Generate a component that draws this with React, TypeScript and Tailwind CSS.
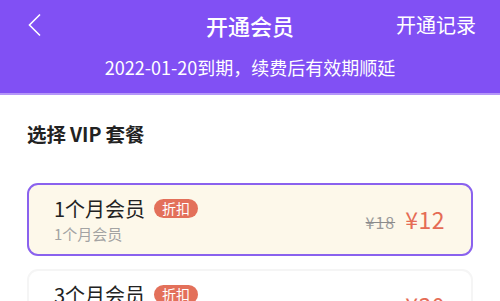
import React from "react";

type Plan = {
  name: string;
  desc: string;
  origin: string;
  price: string;
  active?: boolean;
};

const plans: Plan[] = [
  { name: "1个月会员", desc: "1个月会员", origin: "¥18", price: "¥12", active: true },
  { name: "3个月会员", desc: "3个月会员", origin: "¥54", price: "¥30" },
];

function PlanCard({ plan }: { plan: Plan }) {
  return (
    <div
      className={
        plan.active
          ? "flex items-center h-[73px] rounded-[11px] border-2 border-[#8a62ee] bg-[#fdf8ea] pl-[25px] pr-[26px]"
          : "flex items-center h-[73px] rounded-[11px] border-2 border-[#f5f5f5] bg-white pl-[25px] pr-[26px]"
      }
    >
      <div className="flex flex-col flex-1">
        <div className="flex items-center h-[26px]">
          <span className="text-[20px] leading-[26px] text-[#222]">{plan.name}</span>
          <span className="ml-[9px] h-[19px] px-[8px] rounded-full bg-[#e3705a] text-white text-[14px] leading-[19px]">
            折扣
          </span>
        </div>
        <div className="text-[15px] leading-[20px] mt-[2px] text-[#a3a3a3]">{plan.desc}</div>
      </div>
      <div className="flex items-baseline gap-[10px]">
        <span className="text-[16px] tracking-[1px] text-[#9a9a9a] line-through decoration-[#8a8a8a]">{plan.origin}</span>
        <span className="text-[23px] tracking-[0.5px] text-[#e56c55]">{plan.price}</span>
      </div>
    </div>
  );
}

export default function App() {
  return (
    <div
      className="w-[500px] h-[301px] overflow-hidden bg-white"
      style={{ fontFamily: '"Noto Sans CJK SC", "Noto Sans", sans-serif' }}
    >
      <div className="h-[95px] bg-[#8150f4] border-b-2 border-[#b596f8] text-white">
        <div className="relative flex items-center justify-center h-[50px]">
          <svg
            className="absolute left-[26px] top-[13px]"
            width="18"
            height="24"
            viewBox="0 0 18 24"
            fill="none"
          >
            <path d="M14 1.5L3.5 12L14 22.5" stroke="white" strokeWidth="1.6" />
          </svg>
          <span className="text-[22px] font-medium">开通会员</span>
          <span className="absolute right-[24px] text-[20px]">开通记录</span>
        </div>
        <div className="text-center text-[18px] leading-[24px] mt-[5px]">
          2022-01-20到期，续费后有效期顺延
        </div>
      </div>
      <div className="px-[27px]">
        <div className="mt-[25px] text-[19.5px] font-bold text-[#222] leading-[28px]">
          选择<span className="mx-[4px]">VIP</span>套餐
        </div>
        <div className="mt-[35px] flex flex-col gap-[13px]">
          {plans.map((p) => (
            <PlanCard key={p.name} plan={p} />
          ))}
        </div>
      </div>
    </div>
  );
}
